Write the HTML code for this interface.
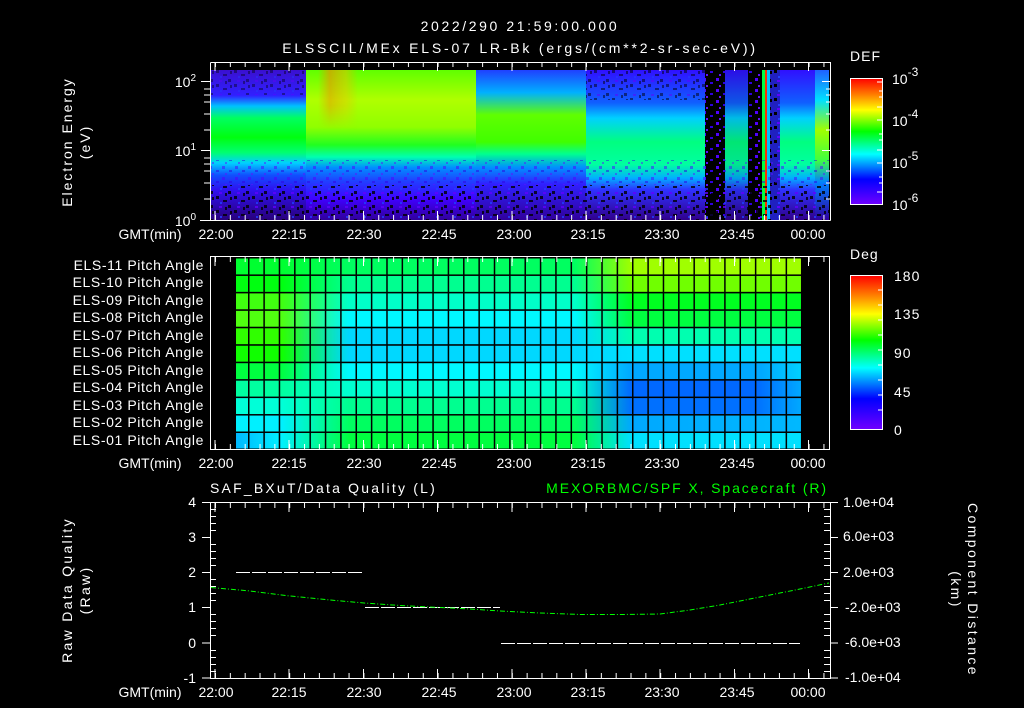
<!DOCTYPE html>
<html><head><meta charset="utf-8"><style>
html,body{margin:0;padding:0;background:#000;width:1024px;height:708px;overflow:hidden}
svg{display:block}
text{font-family:"Liberation Sans",sans-serif;fill:#fff;font-size:14px}
</style></head><body>
<svg width="1024" height="708" viewBox="0 0 1024 708" xmlns="http://www.w3.org/2000/svg">
<defs>
<linearGradient id="gA" x1="0" y1="0" x2="0" y2="1">
<stop offset="0" stop-color="#3a10d0"/><stop offset="0.17" stop-color="#3020ff"/><stop offset="0.24" stop-color="#00c0ff"/><stop offset="0.32" stop-color="#00ff60"/><stop offset="0.45" stop-color="#00ff10"/><stop offset="0.55" stop-color="#00ff70"/><stop offset="0.62" stop-color="#00d0ff"/><stop offset="0.7" stop-color="#1050ff"/><stop offset="0.8" stop-color="#3010f0"/><stop offset="1" stop-color="#28007a"/></linearGradient>
<linearGradient id="gB" x1="0" y1="0" x2="0" y2="1">
<stop offset="0" stop-color="#60ff00"/><stop offset="0.2" stop-color="#b0ff00"/><stop offset="0.38" stop-color="#90ff00"/><stop offset="0.5" stop-color="#20ff20"/><stop offset="0.58" stop-color="#00ffb0"/><stop offset="0.65" stop-color="#0090ff"/><stop offset="0.74" stop-color="#2040ff"/><stop offset="0.86" stop-color="#4000ff"/><stop offset="1" stop-color="#30009a"/></linearGradient>
<linearGradient id="gB2" x1="0" y1="0" x2="0" y2="1">
<stop offset="0" stop-color="#2040ff"/><stop offset="0.15" stop-color="#00b0ff"/><stop offset="0.3" stop-color="#60ff00"/><stop offset="0.48" stop-color="#40ff00"/><stop offset="0.56" stop-color="#00ff90"/><stop offset="0.65" stop-color="#0090ff"/><stop offset="0.76" stop-color="#3020ff"/><stop offset="1" stop-color="#30009a"/></linearGradient>
<linearGradient id="gC" x1="0" y1="0" x2="0" y2="1">
<stop offset="0" stop-color="#3010ff"/><stop offset="0.22" stop-color="#1060ff"/><stop offset="0.32" stop-color="#00d0ff"/><stop offset="0.48" stop-color="#00ff80"/><stop offset="0.63" stop-color="#00ffa0"/><stop offset="0.72" stop-color="#00b0ff"/><stop offset="0.8" stop-color="#3030ff"/><stop offset="1" stop-color="#30008a"/></linearGradient>
<linearGradient id="gG" x1="0" y1="0" x2="0" y2="1">
<stop offset="0" stop-color="#2060ff"/><stop offset="0.2" stop-color="#00e0ff"/><stop offset="0.4" stop-color="#a0ff00"/><stop offset="0.6" stop-color="#40ff40"/><stop offset="0.75" stop-color="#0080ff"/><stop offset="1" stop-color="#3000a0"/></linearGradient>
<linearGradient id="gOr" x1="0" y1="0" x2="1" y2="0">
<stop offset="0" stop-color="#ff8000" stop-opacity="0"/><stop offset="0.3" stop-color="#ff8000" stop-opacity="0.6"/><stop offset="0.7" stop-color="#ffb000" stop-opacity="0.45"/><stop offset="1" stop-color="#ffa000" stop-opacity="0"/></linearGradient>
<linearGradient id="gOrV" x1="0" y1="0" x2="0" y2="1">
<stop offset="0" stop-color="#fff" stop-opacity="1"/><stop offset="0.6" stop-color="#fff" stop-opacity="0.7"/><stop offset="1" stop-color="#fff" stop-opacity="0"/></linearGradient>
<mask id="mOr"><rect x="300" y="70" width="80" height="60" fill="url(#gOrV)"/></mask>
<pattern id="noise" x="0" y="0" width="18" height="14" patternUnits="userSpaceOnUse">
<rect x="0" y="0" width="3" height="3" fill="#000"/><rect x="7" y="4" width="4" height="2" fill="#000"/><rect x="12" y="9" width="3" height="3" fill="#000"/><rect x="3" y="10" width="3" height="2" fill="#6000ff"/><rect x="14" y="1" width="2" height="3" fill="#000"/><rect x="9" y="11" width="2" height="3" fill="#000"/><rect x="4" y="6" width="2" height="2" fill="#2040ff"/></pattern>
<pattern id="noise2" x="0" y="0" width="13" height="11" patternUnits="userSpaceOnUse">
<rect x="1" y="1" width="3" height="3" fill="#5000ff"/><rect x="8" y="5" width="3" height="2" fill="#3000e0"/><rect x="4" y="8" width="2" height="2" fill="#6010ff"/></pattern>
<linearGradient id="cbDEF" x1="0" y1="0" x2="0" y2="1">
<stop offset="0" stop-color="#ff0000"/><stop offset="0.13" stop-color="#ff8000"/><stop offset="0.25" stop-color="#ffff00"/><stop offset="0.42" stop-color="#00ff00"/><stop offset="0.6" stop-color="#00ffff"/><stop offset="0.8" stop-color="#0000ff"/><stop offset="1" stop-color="#7000ff"/></linearGradient>
<pattern id="vgrid" x="248" y="0" width="15.36" height="10" patternUnits="userSpaceOnUse"><rect x="0" y="0" width="1.5" height="10" fill="#000"/></pattern>
<pattern id="hgrid" x="0" y="257" width="10" height="17.45" patternUnits="userSpaceOnUse"><rect x="0" y="0" width="10" height="1.5" fill="#000"/></pattern>
<pattern id="tmin" x="215" y="0" width="14.84" height="10" patternUnits="userSpaceOnUse"><rect x="0" y="0" width="1" height="10" fill="#fff"/></pattern>
<linearGradient id="r11" gradientUnits="userSpaceOnUse" x1="236" x2="801" y1="0" y2="0"><stop offset="0" stop-color="#00ff30"/><stop offset="0.08" stop-color="#00ff30"/><stop offset="0.2" stop-color="#00ff60"/><stop offset="0.6" stop-color="#00ff60"/><stop offset="0.7" stop-color="#a0ff00"/><stop offset="1" stop-color="#a0ff00"/></linearGradient>
<linearGradient id="r10" gradientUnits="userSpaceOnUse" x1="236" x2="801" y1="0" y2="0"><stop offset="0" stop-color="#00ff10"/><stop offset="0.08" stop-color="#00ff10"/><stop offset="0.2" stop-color="#00ff90"/><stop offset="0.6" stop-color="#00ff90"/><stop offset="0.7" stop-color="#70ff00"/><stop offset="1" stop-color="#70ff00"/></linearGradient>
<linearGradient id="r9" gradientUnits="userSpaceOnUse" x1="236" x2="801" y1="0" y2="0"><stop offset="0" stop-color="#40ff10"/><stop offset="0.08" stop-color="#40ff10"/><stop offset="0.2" stop-color="#00ffc8"/><stop offset="0.6" stop-color="#00ffc8"/><stop offset="0.7" stop-color="#00ff20"/><stop offset="1" stop-color="#00ff20"/></linearGradient>
<linearGradient id="r8" gradientUnits="userSpaceOnUse" x1="236" x2="801" y1="0" y2="0"><stop offset="0" stop-color="#50ff10"/><stop offset="0.08" stop-color="#50ff10"/><stop offset="0.2" stop-color="#00f8ff"/><stop offset="0.6" stop-color="#00f8ff"/><stop offset="0.7" stop-color="#00ff40"/><stop offset="1" stop-color="#00ff40"/></linearGradient>
<linearGradient id="r7" gradientUnits="userSpaceOnUse" x1="236" x2="801" y1="0" y2="0"><stop offset="0" stop-color="#30ff00"/><stop offset="0.08" stop-color="#30ff00"/><stop offset="0.2" stop-color="#00d8ff"/><stop offset="0.6" stop-color="#00d8ff"/><stop offset="0.7" stop-color="#00ffb0"/><stop offset="1" stop-color="#00ffb0"/></linearGradient>
<linearGradient id="r6" gradientUnits="userSpaceOnUse" x1="236" x2="801" y1="0" y2="0"><stop offset="0" stop-color="#10ff00"/><stop offset="0.08" stop-color="#10ff00"/><stop offset="0.2" stop-color="#00d8ff"/><stop offset="0.6" stop-color="#00d8ff"/><stop offset="0.7" stop-color="#00e0ff"/><stop offset="1" stop-color="#00e0ff"/></linearGradient>
<linearGradient id="r5" gradientUnits="userSpaceOnUse" x1="236" x2="801" y1="0" y2="0"><stop offset="0" stop-color="#00ff40"/><stop offset="0.08" stop-color="#00ff40"/><stop offset="0.2" stop-color="#00f8ff"/><stop offset="0.6" stop-color="#00f8ff"/><stop offset="0.7" stop-color="#00a8ff"/><stop offset="0.93" stop-color="#00a8ff"/><stop offset="1" stop-color="#00d0ff"/></linearGradient>
<linearGradient id="r4" gradientUnits="userSpaceOnUse" x1="236" x2="801" y1="0" y2="0"><stop offset="0" stop-color="#00ffa0"/><stop offset="0.08" stop-color="#00ffa0"/><stop offset="0.2" stop-color="#00ffd0"/><stop offset="0.6" stop-color="#00ffd0"/><stop offset="0.7" stop-color="#0068ff"/><stop offset="0.92" stop-color="#0068ff"/><stop offset="1" stop-color="#00a8ff"/></linearGradient>
<linearGradient id="r3" gradientUnits="userSpaceOnUse" x1="236" x2="801" y1="0" y2="0"><stop offset="0" stop-color="#00ffd8"/><stop offset="0.08" stop-color="#00ffd8"/><stop offset="0.2" stop-color="#00ff90"/><stop offset="0.6" stop-color="#00ff90"/><stop offset="0.7" stop-color="#0070ff"/><stop offset="0.92" stop-color="#0070ff"/><stop offset="1" stop-color="#00a8ff"/></linearGradient>
<linearGradient id="r2" gradientUnits="userSpaceOnUse" x1="236" x2="801" y1="0" y2="0"><stop offset="0" stop-color="#00f0ff"/><stop offset="0.08" stop-color="#00f0ff"/><stop offset="0.2" stop-color="#00ff60"/><stop offset="0.6" stop-color="#00ff60"/><stop offset="0.7" stop-color="#00a8ff"/><stop offset="1" stop-color="#00b8ff"/></linearGradient>
<linearGradient id="r1" gradientUnits="userSpaceOnUse" x1="236" x2="801" y1="0" y2="0"><stop offset="0" stop-color="#00b8ff"/><stop offset="0.08" stop-color="#00f0ff"/><stop offset="0.2" stop-color="#00ff40"/><stop offset="0.6" stop-color="#00ff40"/><stop offset="0.7" stop-color="#00e0ff"/><stop offset="1" stop-color="#00e0ff"/></linearGradient>
</defs>

<!-- Titles -->
<text x="520" y="31" text-anchor="middle" font-size="18" letter-spacing="2.6">2022/290 21:59:00.000</text>
<text x="520" y="53" text-anchor="middle" font-size="18" letter-spacing="2.8">ELSSCIL/MEx ELS-07 LR-Bk  (ergs/(cm**2-sr-sec-eV))</text>

<!-- Panel 1 spectrogram -->
<rect x="211" y="70" width="95" height="150" fill="url(#gA)"/>
<rect x="306" y="70" width="170" height="150" fill="url(#gB)"/>
<rect x="476" y="70" width="110" height="150" fill="url(#gB2)"/>
<rect x="586" y="70" width="119" height="150" fill="url(#gC)"/>
<rect x="705" y="70" width="20" height="150" fill="#000"/>
<rect x="705" y="70" width="20" height="150" fill="url(#noise2)"/>
<rect x="725" y="70" width="35" height="150" fill="url(#gC)" opacity="0.9"/>
<rect x="748" y="70" width="14" height="150" fill="#000"/>
<rect x="748" y="70" width="14" height="150" fill="url(#noise2)"/>
<rect x="762" y="70" width="3" height="150" fill="#00ff40"/>
<rect x="765" y="70" width="2" height="150" fill="#ff3000"/>
<rect x="767" y="70" width="3" height="150" fill="#00c0ff"/>
<rect x="770" y="70" width="10" height="150" fill="#2020c0"/>
<rect x="770" y="70" width="10" height="150" fill="url(#noise)"/>
<rect x="780" y="70" width="35" height="150" fill="url(#gC)"/>
<rect x="815" y="70" width="14" height="150" fill="url(#gG)"/>
<rect x="318" y="70" width="40" height="60" fill="url(#gOr)" mask="url(#mOr)"/>
<rect x="211" y="185" width="618" height="35" fill="url(#noise)" opacity="0.8"/>
<rect x="211" y="160" width="618" height="25" fill="url(#noise2)" opacity="0.5"/>
<rect x="586" y="70" width="120" height="30" fill="url(#noise)" opacity="0.5"/>
<rect x="211" y="70" width="95" height="25" fill="url(#noise)" opacity="0.4"/>

<!-- Panel 1 axes -->
<g stroke="#fff" fill="none" stroke-width="1">
<path d="M210.5 62.5H830.5V220.5M210.5 62.5V220.5M200 220.5H830.5"/>
<path d="M201 81.5H210M201 150.5H210M204 102H210M204 114H210M204 130H210M204 171H210M204 183H210M204 199H210M204 95H210M204 89H210M204 164H210M204 158H210"/>
<path d="M830 81.5H822M830 150.5H822M830 102H826M830 114H826M830 130H826M830 171H826M830 183H826M830 199H826M830 95H826M830 89H826"/>
</g>
<rect x="211" y="62" width="619" height="5" fill="url(#tmin)"/>
<rect x="211" y="215" width="619" height="5" fill="url(#tmin)"/>
<g stroke="#fff"><path d="M215 62v9M289 62v9M363.5 62v9M437.5 62v9M512 62v9M586 62v9M660 62v9M734.5 62v9M808.5 62v9M215 220v-9M289 220v-9M363.5 220v-9M437.5 220v-9M512 220v-9M586 220v-9M660 220v-9M734.5 220v-9M808.5 220v-9"/></g>
<text x="196" y="87" text-anchor="end">10<tspan font-size="10" dy="-6">2</tspan></text>
<text x="196" y="156" text-anchor="end">10<tspan font-size="10" dy="-6">1</tspan></text>
<text x="196" y="226" text-anchor="end">10<tspan font-size="10" dy="-6">0</tspan></text>
<text transform="translate(72 142) rotate(-90)" text-anchor="middle" letter-spacing="2">Electron Energy</text>
<text transform="translate(90 142) rotate(-90)" text-anchor="middle" letter-spacing="2">(eV)</text>
<g text-anchor="middle">
<text x="150" y="239">GMT(min)</text>
<text x="216" y="239">22:00</text><text x="289" y="239">22:15</text><text x="364" y="239">22:30</text><text x="439" y="239">22:45</text><text x="514" y="239">23:00</text><text x="588" y="239">23:15</text><text x="662" y="239">23:30</text><text x="737" y="239">23:45</text><text x="808" y="239">00:00</text>
</g>
<!-- DEF colorbar -->
<text x="850" y="61" font-size="17" letter-spacing="1">DEF</text>
<rect x="850.5" y="78.5" width="32" height="126" fill="url(#cbDEF)" stroke="#fff"/>
<g stroke="#fff"><path d="M882 82h-5M882 91h-3M882 97h-3M882 107h-5M882 120h-5M882 134h-3M882 140h-3M882 150h-5M882 163h-5M882 177h-3M882 183h-3M882 192h-5"/></g>
<text x="892" y="84" font-size="17">10<tspan font-size="12" dy="-8">-3</tspan></text>
<text x="892" y="126" font-size="17">10<tspan font-size="12" dy="-8">-4</tspan></text>
<text x="892" y="168" font-size="17">10<tspan font-size="12" dy="-8">-5</tspan></text>
<text x="892" y="210" font-size="17">10<tspan font-size="12" dy="-8">-6</tspan></text>

<!-- Panel 2 -->
<rect x="236" y="257" width="565" height="17.45" fill="url(#r11)"/>
<rect x="236" y="274.45" width="565" height="17.45" fill="url(#r10)"/>
<rect x="236" y="291.9" width="565" height="17.45" fill="url(#r9)"/>
<rect x="236" y="309.35" width="565" height="17.45" fill="url(#r8)"/>
<rect x="236" y="326.8" width="565" height="17.45" fill="url(#r7)"/>
<rect x="236" y="344.25" width="565" height="17.45" fill="url(#r6)"/>
<rect x="236" y="361.7" width="565" height="17.45" fill="url(#r5)"/>
<rect x="236" y="379.15" width="565" height="17.45" fill="url(#r4)"/>
<rect x="236" y="396.6" width="565" height="17.45" fill="url(#r3)"/>
<rect x="236" y="414.05" width="565" height="17.45" fill="url(#r2)"/>
<rect x="236" y="431.5" width="565" height="17" fill="url(#r1)"/>
<rect x="236" y="257" width="566" height="192" fill="url(#vgrid)"/>
<rect x="236" y="257" width="566" height="192" fill="url(#hgrid)"/>
<rect x="210.5" y="256.5" width="619" height="193" fill="none" stroke="#fff"/>
<rect x="211" y="257" width="619" height="5" fill="url(#tmin)"/>
<rect x="211" y="444" width="619" height="5" fill="url(#tmin)"/>
<g stroke="#fff"><path d="M215 257v9M289 257v9M363.5 257v9M437.5 257v9M512 257v9M586 257v9M660 257v9M734.5 257v9M808.5 257v9M215 449v-9M289 449v-9M363.5 449v-9M437.5 449v-9M512 449v-9M586 449v-9M660 449v-9M734.5 449v-9M808.5 449v-9"/></g>
<g text-anchor="end" font-size="13" letter-spacing="0.6">
<text x="204" y="270">ELS-11 Pitch Angle</text>
<text x="204" y="287">ELS-10 Pitch Angle</text>
<text x="204" y="305">ELS-09 Pitch Angle</text>
<text x="204" y="322">ELS-08 Pitch Angle</text>
<text x="204" y="340">ELS-07 Pitch Angle</text>
<text x="204" y="357">ELS-06 Pitch Angle</text>
<text x="204" y="375">ELS-05 Pitch Angle</text>
<text x="204" y="392">ELS-04 Pitch Angle</text>
<text x="204" y="410">ELS-03 Pitch Angle</text>
<text x="204" y="427">ELS-02 Pitch Angle</text>
<text x="204" y="445">ELS-01 Pitch Angle</text>
</g>
<g text-anchor="middle">
<text x="150" y="468">GMT(min)</text>
<text x="216" y="468">22:00</text><text x="289" y="468">22:15</text><text x="364" y="468">22:30</text><text x="439" y="468">22:45</text><text x="514" y="468">23:00</text><text x="588" y="468">23:15</text><text x="662" y="468">23:30</text><text x="737" y="468">23:45</text><text x="808" y="468">00:00</text>
</g>
<text x="850" y="259" font-size="17" letter-spacing="1">Deg</text>
<rect x="850.5" y="275.5" width="32" height="154" fill="url(#cbDEF)" stroke="#fff"/>
<g stroke="#fff"><path d="M882 290h-4M882 305h-4M882 320h-4M882 335h-4M882 350h-4M882 365h-4M882 380h-4M882 395h-4M882 410h-4"/></g>
<g font-size="17" letter-spacing="1"><text x="894" y="281">180</text><text x="894" y="319">135</text><text x="894" y="358">90</text><text x="894" y="397">45</text><text x="894" y="435">0</text></g>

<!-- Panel 3 -->
<text x="210" y="493" font-size="16" letter-spacing="2.2">SAF_BXuT/Data Quality (L)</text>
<text x="828" y="493" font-size="16" letter-spacing="1.9" text-anchor="end" style="fill:#00ff00">MEXORBMC/SPF X, Spacecraft (R)</text>
<g stroke="#fff" fill="none">
<path d="M210.5 502.5H830.5V678.5H210.5Z"/>
<path d="M202 502.5h8M202 537.5h8M202 572.5h8M202 607.5h8M202 643h8M202 678h8"/>
<path d="M210 509.5h6M210 516.5h6M210 523.5h6M210 530.5h6M210 544.5h6M210 551.5h6M210 558.5h6M210 565.5h6M210 579.5h6M210 586.5h6M210 593.5h6M210 600.5h6M210 614.5h6M210 621.5h6M210 628.5h6M210 635.5h6M210 650.5h6M210 657.5h6M210 664.5h6M210 671.5h6"/>
<path d="M830 502.5h8M830 537.5h8M830 572.5h8M830 607.5h8M830 643h8M830 678h8"/>
<path d="M830 509.5h-6M830 516.5h-6M830 523.5h-6M830 530.5h-6M830 544.5h-6M830 551.5h-6M830 558.5h-6M830 565.5h-6M830 579.5h-6M830 586.5h-6M830 593.5h-6M830 600.5h-6M830 614.5h-6M830 621.5h-6M830 628.5h-6M830 635.5h-6M830 650.5h-6M830 657.5h-6M830 664.5h-6M830 671.5h-6"/>
</g>
<rect x="211" y="503" width="619" height="5" fill="url(#tmin)"/>
<rect x="211" y="673" width="619" height="5" fill="url(#tmin)"/>
<g stroke="#fff"><path d="M215 503v9M289 503v9M363.5 503v9M437.5 503v9M512 503v9M586 503v9M660 503v9M734.5 503v9M808.5 503v9M215 678v-9M289 678v-9M363.5 678v-9M437.5 678v-9M512 678v-9M586 678v-9M660 678v-9M734.5 678v-9M808.5 678v-9"/></g>
<g stroke="#fff" stroke-dasharray="14 2" stroke-width="1">
<path d="M236 572.5H364"/><path d="M365 607.5H500"/><path d="M501 643.5H800"/>
</g>
<path d="M211 587.5L250 591L290 596L330 600L364 603L400 605.5L440 607.5L470 609L500 611L540 613L580 614.5L620 614.5L660 614L690 610L720 605L760 597L800 589L829 583" fill="none" stroke="#00ff00" stroke-dasharray="5 2 1 2"/>
<g text-anchor="end" font-size="14">
<text x="196" y="507">4</text><text x="196" y="542">3</text><text x="196" y="577">2</text><text x="196" y="612">1</text><text x="196" y="648">0</text><text x="196" y="683">-1</text>
</g>
<g font-size="13">
<text x="843" y="507">1.0e+04</text><text x="843" y="541">6.0e+03</text><text x="843" y="577">2.0e+03</text><text x="845" y="612">-2.0e+03</text><text x="845" y="647">-6.0e+03</text><text x="845" y="682">-1.0e+04</text>
</g>
<text transform="translate(72 590) rotate(-90)" text-anchor="middle" letter-spacing="2.3">Raw Data Quality</text>
<text transform="translate(90 590) rotate(-90)" text-anchor="middle" letter-spacing="2.3">(Raw)</text>
<text transform="translate(968 590) rotate(90)" text-anchor="middle" letter-spacing="2.4">Component Distance</text>
<text transform="translate(951 590) rotate(90)" text-anchor="middle" letter-spacing="2.4">(km)</text>
<g text-anchor="middle">
<text x="150" y="697">GMT(min)</text>
<text x="216" y="697">22:00</text><text x="289" y="697">22:15</text><text x="364" y="697">22:30</text><text x="439" y="697">22:45</text><text x="514" y="697">23:00</text><text x="588" y="697">23:15</text><text x="662" y="697">23:30</text><text x="737" y="697">23:45</text><text x="808" y="697">00:00</text>
</g>
</svg>
</body></html>
